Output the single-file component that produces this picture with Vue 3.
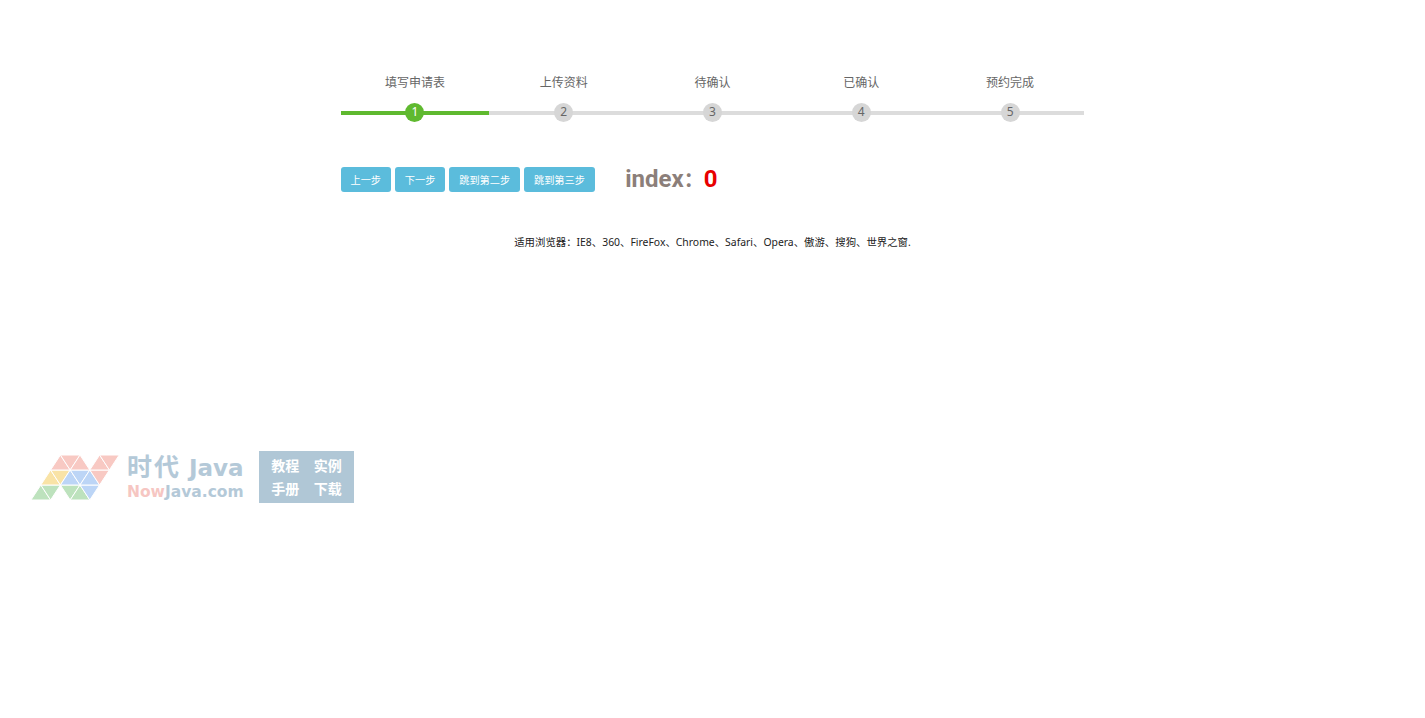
<script setup>
const steps = ['填写申请表', '上传资料', '待确认', '已确认', '预约完成']
const buttons = ['上一步', '下一步', '跳到第二步', '跳到第三步']
const u = 9.8
const h = 15
const x0 = 31
const y0 = 500
const tri = (col, row, up, fill) => {
  const yb = y0 - row * h
  const yt = yb - h
  const pts = up
    ? [[col, yb], [col + 2, yb], [col + 1, yt]]
    : [[col, yt], [col + 2, yt], [col + 1, yb]]
  return { points: pts.map(p => `${(x0 + p[0] * u).toFixed(1)},${p[1]}`).join(' '), fill }
}
const pink = '#f8c9c3', yellow = '#f9e3a6', blue = '#bcd5f6', green = '#bde2bd'
const tris = [
  tri(0, 0, true, green), tri(1, 0, false, green), tri(3, 0, false, green), tri(4, 0, true, green), tri(5, 0, false, blue),
  tri(1, 1, true, yellow), tri(2, 1, false, yellow), tri(3, 1, true, blue), tri(4, 1, false, blue), tri(5, 1, true, blue), tri(6, 1, false, pink),
  tri(2, 2, true, pink), tri(3, 2, false, pink), tri(4, 2, true, pink), tri(6, 2, true, pink), tri(7, 2, false, pink)
]
</script>

<template>
  <main class="page">
    <section class="steps">
      <div v-for="(s, i) in steps" :key="s" class="step" :class="{ active: i === 0 }">
        <div class="label">{{ s }}</div>
        <div class="track"><span class="dot">{{ i + 1 }}</span></div>
      </div>
    </section>
    <section class="actions">
      <button v-for="b in buttons" :key="b" class="btn" type="button">{{ b }}</button>
      <div class="index">index<span class="colon">：</span><span class="num">0</span></div>
    </section>
    <p class="browsers">适用浏览器：IE8、360、FireFox、Chrome、Safari、Opera、傲游、搜狗、世界之窗.</p>
  </main>
  <aside class="promo">
    <svg class="tris" width="100" height="56" viewBox="25 450 100 56">
      <polygon v-for="(t, i) in tris" :key="i" :points="t.points" :fill="t.fill" stroke="#fff" stroke-width="1" />
    </svg>
    <div class="brand">
      <div class="brand-top"><span class="cn">时代</span> Java</div>
      <div class="brand-sub"><span class="now">Now</span>Java.com</div>
    </div>
    <div class="links">
      <span>教程</span><span>实例</span><span>手册</span><span>下载</span>
    </div>
  </aside>
</template>

<style scoped>
.page {
  width: 744px;
  margin: 0 auto;
  padding-top: 74px;
  font-family: "Noto Sans", "Noto Sans CJK SC", sans-serif;
}
.steps { display: flex; }
.step { flex: 1; text-align: center; }
.label {
  height: 18px;
  line-height: 18px;
  font-size: 12px;
  color: #666;
}
.track {
  height: 4px;
  margin-top: 19px;
  background: #dcdcdc;
  display: flex;
  justify-content: center;
  align-items: center;
}
.active .track { background: #5fb92f; }
.dot {
  width: 19px;
  height: 19px;
  flex: none;
  margin-top: -1px;
  border-radius: 50%;
  background: #d6d6d6;
  color: #666;
  font-size: 12px;
  line-height: 18px;
  text-align: center;
}
.active .dot { background: #5fb92f; color: #fff; }
.actions {
  display: flex;
  align-items: center;
  gap: 3.8px;
  margin-top: 52px;
  height: 25px;
}
.btn {
  height: 25px;
  padding: 0 10px;
  border: 0;
  border-radius: 3px;
  background: #5bbcdc;
  color: #fff;
  font: 10.2px "Noto Sans CJK SC", sans-serif;
}
.index {
  display: flex;
  align-items: baseline;
  margin-left: 26.5px;
  font: 700 24px/25px Roboto, "Noto Sans CJK SC", sans-serif;
  color: #8c7f7a;
}
.colon { font-size: 20px; }
.num { color: #e80000; }
.browsers {
  margin: 41px 0 0;
  font-size: 10.4px;
  line-height: 18px;
  color: #222;
  text-align: center;
}
.promo {
  position: absolute;
  left: 0;
  top: 450px;
  width: 360px;
  height: 56px;
}
.tris { position: absolute; left: 25px; top: 0; }
.brand { position: absolute; left: 127px; top: 4px; }
.brand-top {
  font: 700 23px/28px "DejaVu Sans", "Noto Sans CJK SC", sans-serif;
  color: #b4c9d8;
  white-space: nowrap;
}
.cn { font-size: 25px; letter-spacing: 2px; }
.brand-sub {
  font: 700 15.5px/20px "DejaVu Sans", sans-serif;
  color: #b4c9d8;
  white-space: nowrap;
}
.now { color: #f6c6c2; }
.links {
  position: absolute;
  left: 259px;
  top: 1px;
  width: 95px;
  height: 52px;
  background: #b0c7d6;
  display: grid;
  grid-template-columns: 1fr 1fr;
  align-items: center;
  justify-items: center;
  padding: 2px 5px 4px;
  box-sizing: border-box;
  color: #fff;
  font: 700 14px "Noto Sans CJK SC", sans-serif;
}
</style>
